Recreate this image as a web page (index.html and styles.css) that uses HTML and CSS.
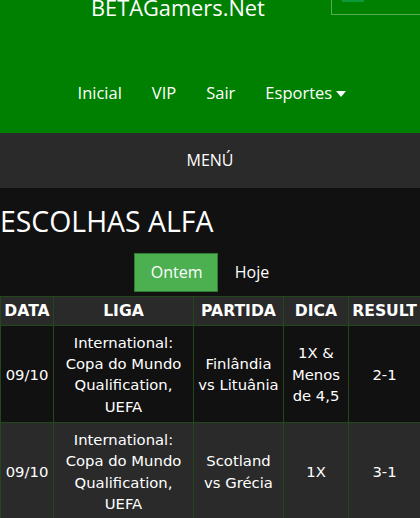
FILE: index.html
```html
<!DOCTYPE html>
<html lang="pt">
<head>
<meta charset="utf-8">
<link rel="stylesheet" href="styles.css">
</head>
<body>
<header class="site-header">
  <div class="brand-row">
    <span class="brand">BETAGamers.Net</span>
    <span class="toggle"><span class="toggle-bar"></span></span>
  </div>
  <nav class="main-nav">
    <a class="nav-link">Inicial</a>
    <a class="nav-link">VIP</a>
    <a class="nav-link">Sair</a>
    <a class="nav-link">Esportes <svg class="caret" width="10" height="6" viewBox="0 0 10 6"><path d="M0 0H10L5 6Z" fill="#fff"/></svg></a>
  </nav>
</header>
<div class="menu-bar">MENÚ</div>
<main class="content">
  <h1 class="page-title">ESCOLHAS ALFA</h1>
  <div class="tabs">
    <span class="tab active">Ontem</span>
    <span class="tab">Hoje</span>
  </div>
  <table class="picks">
    <colgroup>
      <col class="c-data"><col class="c-liga"><col class="c-partida"><col class="c-dica"><col class="c-result">
    </colgroup>
    <thead>
      <tr><th>DATA</th><th>LIGA</th><th>PARTIDA</th><th>DICA</th><th>RESULT</th></tr>
    </thead>
    <tbody>
      <tr class="odd">
        <td>09/10</td>
        <td>International:<br>Copa do Mundo<br>Qualification,<br>UEFA</td>
        <td>Finlândia<br>vs Lituânia</td>
        <td>1X &amp;<br>Menos<br>de 4,5</td>
        <td>2-1</td>
      </tr>
      <tr class="even">
        <td>09/10</td>
        <td>International:<br>Copa do Mundo<br>Qualification,<br>UEFA</td>
        <td>Scotland<br>vs Grécia</td>
        <td>1X</td>
        <td>3-1</td>
      </tr>
    </tbody>
  </table>
</main>
</body>
</html>
```

FILE: styles.css
```css
html, body {
  margin: 0;
  padding: 0;
  background: #111111;
  color: #ffffff;
  font-family: "Open Sans", "Noto Sans", sans-serif;
  overflow: hidden;
}
.site-header {
  background: #008000;
  height: 133px;
  position: relative;
  display: flow-root;
}
.brand-row {
  margin-top: -8px;
  height: 32px;
  padding-left: 91px;
}
.brand {
  font-size: 21.8px;
  line-height: 32px;
  color: #fff;
}
.toggle {
  position: absolute;
  top: -20px;
  left: 331px;
  width: 88px;
  height: 33px;
  border: 1px solid rgba(255,255,255,0.35);
}
.toggle-bar {
  position: absolute;
  left: 10px;
  bottom: 12px;
  width: 22px;
  height: 2px;
  background: #0f9a3a;
}
.main-nav {
  display: flex;
  justify-content: center;
  margin-top: 57px;
  padding-left: 4px;
}
.nav-link {
  font-size: 16.5px;
  line-height: 24px;
  padding: 0 15px;
  color: #fff;
}
.caret {
  vertical-align: 2px;
}
.menu-bar {
  background: #2a2a2a;
  height: 55px;
  line-height: 55px;
  text-align: center;
  font-size: 16px;
}
.content {
  padding-top: 13px;
}
.page-title {
  margin: 0;
  font-weight: 400;
  font-size: 28.4px;
  line-height: 41px;
  padding-left: 0;
}
.tabs {
  display: flex;
  justify-content: center;
  margin-top: 11px;
  gap: 0;
}
.tab {
  font-size: 16px;
  line-height: 37px;
  padding: 0 16px;
  border: 1px solid transparent;
}
.tab.active {
  background: #4caf50;
  border-color: #2e7d32;
  width: 50px;
}
.picks {
  margin-top: 4px;
  width: 420px;
  border-collapse: collapse;
  table-layout: fixed;
  font-family: "DejaVu Sans", sans-serif;
  font-size: 14.8px;
}
.c-data { width: 53px; }
.c-liga { width: 140px; }
.c-partida { width: 90px; }
.c-dica { width: 65px; }
.c-result { width: 72px; }
.picks th, .picks td {
  border: 1px solid #23461a;
  text-align: center;
  padding: 5.5px 0;
  line-height: 21.3px;
  white-space: nowrap;
}
.picks th {
  background: #2a2a2a;
  font-weight: 700;
  font-size: 15.6px;
  padding: 3.5px 0;
}
.odd td { background: #111111; }
.even td { background: #2a2a2a; }
```
